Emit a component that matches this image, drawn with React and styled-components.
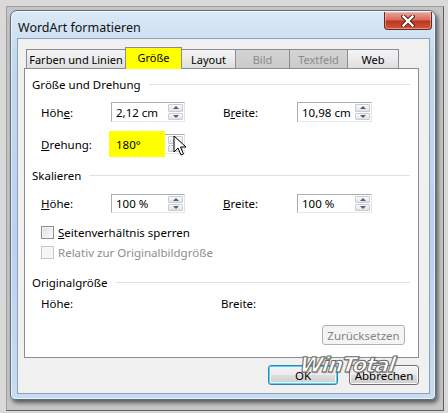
import React from 'react';
import styled, { createGlobalStyle, css } from 'styled-components';

const UI_FONT = `"Noto Sans", "Open Sans", sans-serif`;

const GlobalStyle = createGlobalStyle`
    html, body {
        margin: 0;
        padding: 0;
        background: #d4d4d4;
    }
    * {
        box-sizing: border-box;
    }
`;

const Screen = styled.div`
    position: relative;
    width: 448px;
    height: 413px;
    padding: 6px 4px 2px 6px;
    background: #d9d9d9;
    font-family: ${UI_FONT};
    font-size: 11.5px;
    color: #000;
`;

const Frame = styled.div`
    width: 100%;
    height: 100%;
    padding: 3px 7px 8px 3px;
    background: #c6c6c6;
    border: 1px solid;
    border-color: #9c9c9c #5f5f5f #5f5f5f #9c9c9c;
`;

const Window = styled.div`
    display: flex;
    flex-direction: column;
    width: 426px;
    height: 390px;
    border: 1px solid #5d6d7e;
    border-radius: 7px 7px 5px 5px;
    background: linear-gradient(180deg, #dce9f6 0%, #c3d9ef 12%, #b9d3ee 60%, #c8dcf2 100%);
    box-shadow: 2px 3px 4px rgba(0, 0, 0, 0.55), inset 0 0 0 1px rgba(255, 255, 255, 0.6);
`;

const TitleBar = styled.div`
    display: flex;
    align-items: flex-start;
    justify-content: space-between;
    height: 27px;
    padding-left: 7px;
`;

const Title = styled.div`
    padding-top: 8px;
    font-size: 12.5px;
    color: #111;
`;

const CloseButton = styled.div`
    display: flex;
    align-items: center;
    justify-content: center;
    width: 48px;
    height: 18px;
    margin-top: 1px;
    margin-right: 3px;
    border: 1px solid #6b2418;
    border-top: none;
    border-radius: 0 0 4px 4px;
    background: linear-gradient(180deg, #e9a596 0%, #d86e5c 45%, #c0341f 55%, #d0573c 100%);
    box-shadow: inset 0 0 0 1px rgba(255, 220, 210, 0.45);
`;

const Client = styled.div`
    display: flex;
    flex-direction: column;
    flex: 1;
    margin: 0 5px 5px 6px;
    padding: 8px 10px 0 6px;
    background: #f0f0f0;
    border: 1px solid #8ea2b7;
`;

const TabRow = styled.div`
    display: flex;
    align-items: flex-end;
    height: 21px;
    padding-left: 2px;
    position: relative;
    z-index: 1;
`;

const Tab = styled.div`
    display: flex;
    align-items: center;
    justify-content: center;
    width: ${p => p.$w}px;
    height: 19px;
    margin-left: -1px;
    border: 1px solid #898c95;
    border-bottom: none;
    background: linear-gradient(180deg, #f4f4f4 0%, #ebebeb 50%, #dedede 100%);
    font-size: 11px;
    white-space: nowrap;
    padding-top: 1px;

    &:first-child {
        margin-left: 0;
    }

    ${p => p.$disabled && css`
        background: linear-gradient(180deg, #d4d4d4 0%, #cbcbcb 100%);
        color: #8a8a8a;
    `}

    ${p => p.$active && css`
        height: 22px;
        margin-bottom: -1px;
        background: #ffff00;
        position: relative;
        z-index: 2;
        padding-top: 0;
        padding-bottom: 2px;
    `}
`;

const Panel = styled.div`
    display: flex;
    flex-direction: column;
    height: 290px;
    padding: 5px 7px 0 7px;
    background: #fff;
    border: 1px solid #898c95;
`;

const SectionTitle = styled.div`
    display: flex;
    align-items: center;
    height: 20px;
    margin-top: ${p => p.$top || 0}px;

    &::after {
        content: '';
        flex: 1;
        margin-left: 8px;
        margin-right: 1px;
        border-top: 1px solid #dce2e9;
    }
`;

const Row = styled.div`
    display: flex;
    align-items: center;
    height: ${p => p.$h || 20}px;
    margin-top: ${p => p.$top || 0}px;
    padding-left: 9px;
`;

const Label = styled.div`
    width: ${p => p.$w}px;
    flex-shrink: 0;
    color: ${p => p.$disabled ? '#8d8d8d' : '#000'};
`;

const Gap = styled.div`
    width: ${p => p.$w}px;
    flex-shrink: 0;
`;

const SpinBox = styled.div`
    position: relative;
    display: flex;
    align-items: center;
    width: ${p => p.$w}px;
    height: ${p => p.$h || 20}px;
    padding: 0 1px 0 4px;
    border: 1px solid;
    border-color: #abadb3 #e2e3ea #e3e9ef #abadb3;
    box-shadow: inset 0 0 0 1px #fff;
    background: #fff;
`;

const SpinValue = styled.div`
    flex: 1;
    position: relative;
    z-index: 1;
`;

const Highlight = styled.div`
    position: absolute;
    left: -3px;
    top: -4px;
    width: 56px;
    height: 26px;
    background: #ffff00;
`;

const SpinButtons = styled.div`
    display: flex;
    flex-direction: column;
    gap: 1px;
    width: 15px;
    height: 100%;
    padding: 1px 0;
`;

const SpinButton = styled.div`
    flex: 1;
    display: flex;
    align-items: center;
    justify-content: center;
    border: 1px solid #c7ccd4;
    border-radius: 1px;
    background: linear-gradient(180deg, #fbfbfb 0%, #ececec 60%, #e2e2e2 100%);

    &::before {
        content: '';
        width: 0;
        height: 0;
        border-left: 3px solid transparent;
        border-right: 3px solid transparent;
        ${p => p.$down
            ? css`border-top: 3px solid #4c5f80;`
            : css`border-bottom: 3px solid #4c5f80;`}
    }
`;

const Check = styled.div`
    width: 13px;
    height: 13px;
    margin-right: 4px;
    border: 1px solid ${p => p.$disabled ? '#c6c6c6' : '#8f8f8f'};
    background: ${p => p.$disabled
        ? '#f4f4f4'
        : 'linear-gradient(135deg, #dcdcdc 0%, #f0f0f0 60%, #fbfbfb 100%)'};
    box-shadow: inset 0 0 0 1px ${p => p.$disabled ? '#f7f7f7' : '#f4f4f4'};
`;

const ButtonRow = styled.div`
    display: flex;
    justify-content: flex-end;
    margin-top: ${p => p.$top || 0}px;
    margin-right: ${p => p.$right || 0}px;
`;

const Button = styled.div`
    display: flex;
    align-items: center;
    justify-content: center;
    width: ${p => p.$w}px;
    height: ${p => p.$h}px;
    border: 1px solid #707070;
    border-radius: 3px;
    background: linear-gradient(180deg, #f2f2f2 0%, #ebebeb 48%, #dddddd 52%, #cfcfcf 100%);
    box-shadow: inset 0 0 0 1px #fcfcfc;

    ${p => p.$focused && css`
        border-color: #3c7fb1;
        box-shadow: inset 0 0 0 1px #48d8fb, inset 0 0 0 2px #f4f4f4;
    `}

    ${p => p.$disabled && css`
        border-color: #adb2b5;
        background: #f4f4f4;
        box-shadow: none;
        color: #838383;
    `}
`;

const Footer = styled.div`
    display: flex;
    justify-content: flex-end;
    gap: 11px;
    margin-top: 7px;
`;

const Watermark = styled.div`
    position: absolute;
    left: 300px;
    top: 353px;
    font-family: "DejaVu Sans", sans-serif;
    font-size: 21px;
    font-weight: bold;
    font-style: italic;
    letter-spacing: -1px;
    color: #fff;
    -webkit-text-stroke: 1px #6a6a6a;
    text-shadow: 1px 1px 1px rgba(0, 0, 0, 0.35);
    transform: skewX(-8deg);
    z-index: 5;
`;

const Cursor = styled.svg`
    position: absolute;
    left: 173px;
    top: 135px;
    z-index: 5;
`;

const Spin = ({ w, h, value, highlight }) => (
    <SpinBox $w={w} $h={h}>
        {highlight && <Highlight />}
        <SpinValue>{value}</SpinValue>
        <SpinButtons>
            <SpinButton />
            <SpinButton $down />
        </SpinButtons>
    </SpinBox>
);

const tabs = [
    { label: 'Farben und Linien', w: 100 },
    { label: 'Größe', w: 57, active: true },
    { label: 'Layout', w: 55 },
    { label: 'Bild', w: 55, disabled: true },
    { label: 'Textfeld', w: 59, disabled: true },
    { label: 'Web', w: 52 },
];

export default function App() {
    return (
        <>
            <GlobalStyle />
            <Screen>
                <Frame>
                    <Window>
                        <TitleBar>
                            <Title>WordArt formatieren</Title>
                            <CloseButton>
                                <svg width="14" height="12" viewBox="0 0 14 12">
                                    <path d="M2.5 1.5 L11.5 10.5 M11.5 1.5 L2.5 10.5"
                                        stroke="#4a1a12" strokeWidth="4.2" strokeLinecap="square" fill="none" />
                                    <path d="M2.5 1.5 L11.5 10.5 M11.5 1.5 L2.5 10.5"
                                        stroke="#fff" strokeWidth="2.4" strokeLinecap="square" fill="none" />
                                </svg>
                            </CloseButton>
                        </TitleBar>
                        <Client>
                            <TabRow>
                                {tabs.map(t => (
                                    <Tab key={t.label} $w={t.w} $active={t.active} $disabled={t.disabled}>
                                        {t.label}
                                    </Tab>
                                ))}
                            </TabRow>
                            <Panel>
                                <SectionTitle>Größe und Drehung</SectionTitle>
                                <Row $top={8}>
                                    <Label $w={70}>Höh<u>e</u>:</Label>
                                    <Spin w={74} value="2,12 cm" />
                                    <Gap $w={38} />
                                    <Label $w={74}>B<u>r</u>eite:</Label>
                                    <Spin w={75} value="10,98 cm" />
                                </Row>
                                <Row $top={12}>
                                    <Label $w={70}><u>D</u>rehung:</Label>
                                    <Spin w={74} value="180°" highlight />
                                </Row>
                                <SectionTitle $top={11}>Skalieren</SectionTitle>
                                <Row $top={8}>
                                    <Label $w={70}><u>H</u>öhe:</Label>
                                    <Spin w={74} h={19} value="100 %" />
                                    <Gap $w={38} />
                                    <Label $w={74}><u>B</u>reite:</Label>
                                    <Spin w={75} h={19} value="100 %" />
                                </Row>
                                <Row $top={10} $h={18}>
                                    <Check />
                                    <Label><u>S</u>eitenverhältnis sperren</Label>
                                </Row>
                                <Row $top={2} $h={18}>
                                    <Check $disabled />
                                    <Label $disabled>Relativ zur Originalbildgröße</Label>
                                </Row>
                                <SectionTitle $top={11}>Originalgröße</SectionTitle>
                                <Row $top={1}>
                                    <Label $w={180}>Höhe:</Label>
                                    <Label>Breite:</Label>
                                </Row>
                                <ButtonRow $top={12} $right={6}>
                                    <Button $w={83} $h={20} $disabled>Zurücksetzen</Button>
                                </ButtonRow>
                            </Panel>
                            <Footer>
                                <Button $w={70} $h={20} $focused>OK</Button>
                                <Button $w={70} $h={20}>Abbrechen</Button>
                            </Footer>
                        </Client>
                    </Window>
                </Frame>
                <Watermark>WinTotal</Watermark>
                <Cursor width="14" height="22" viewBox="0 0 14 22">
                    <path d="M1 1 L1 17 L5 13 L8 20 L10.5 19 L7.5 12 L13 12 Z"
                        fill="#fff" stroke="#000" strokeWidth="1" strokeLinejoin="miter" />
                </Cursor>
            </Screen>
        </>
    );
}
